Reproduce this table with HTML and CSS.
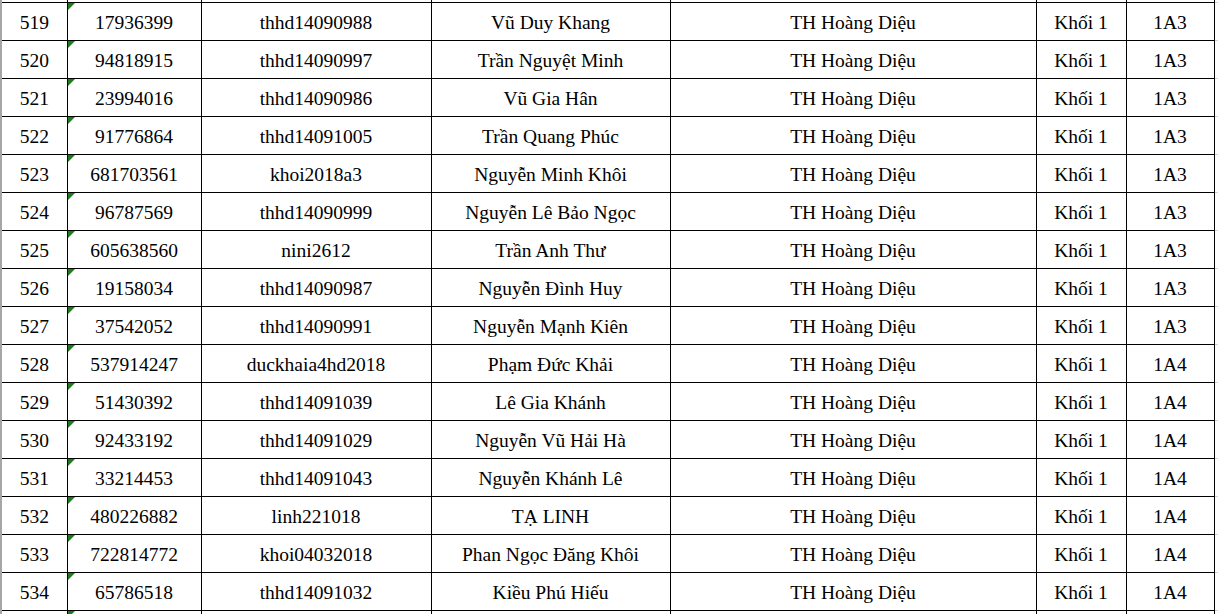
FILE: index.html
```html
<!DOCTYPE html>
<html lang="vi">
<head>
<meta charset="utf-8">
<title>Danh sách</title>
<link rel="stylesheet" href="styles.css">
</head>
<body>
<div class="sheet">
<table class="grid">
<colgroup>
<col class="c1"><col class="c2"><col class="c3"><col class="c4"><col class="c5"><col class="c6"><col class="c7"><col class="c8">
</colgroup>
<tbody>
<tr class="edge"><td></td><td class="txt"></td><td></td><td></td><td></td><td></td><td></td><td class="gap"></td></tr>
<tr><td>519</td><td class="txt">17936399</td><td>thhd14090988</td><td>Vũ Duy Khang</td><td>TH Hoàng Diệu</td><td>Khối 1</td><td>1A3</td><td class="gap"></td></tr>
<tr><td>520</td><td class="txt">94818915</td><td>thhd14090997</td><td>Trần Nguyệt Minh</td><td>TH Hoàng Diệu</td><td>Khối 1</td><td>1A3</td><td class="gap"></td></tr>
<tr><td>521</td><td class="txt">23994016</td><td>thhd14090986</td><td>Vũ Gia Hân</td><td>TH Hoàng Diệu</td><td>Khối 1</td><td>1A3</td><td class="gap"></td></tr>
<tr><td>522</td><td class="txt">91776864</td><td>thhd14091005</td><td>Trần Quang Phúc</td><td>TH Hoàng Diệu</td><td>Khối 1</td><td>1A3</td><td class="gap"></td></tr>
<tr><td>523</td><td class="txt">681703561</td><td>khoi2018a3</td><td>Nguyễn Minh Khôi</td><td>TH Hoàng Diệu</td><td>Khối 1</td><td>1A3</td><td class="gap"></td></tr>
<tr><td>524</td><td class="txt">96787569</td><td>thhd14090999</td><td>Nguyễn Lê Bảo Ngọc</td><td>TH Hoàng Diệu</td><td>Khối 1</td><td>1A3</td><td class="gap"></td></tr>
<tr><td>525</td><td class="txt">605638560</td><td>nini2612</td><td>Trần Anh Thư</td><td>TH Hoàng Diệu</td><td>Khối 1</td><td>1A3</td><td class="gap"></td></tr>
<tr><td>526</td><td class="txt">19158034</td><td>thhd14090987</td><td>Nguyễn Đình Huy</td><td>TH Hoàng Diệu</td><td>Khối 1</td><td>1A3</td><td class="gap"></td></tr>
<tr><td>527</td><td class="txt">37542052</td><td>thhd14090991</td><td>Nguyễn Mạnh Kiên</td><td>TH Hoàng Diệu</td><td>Khối 1</td><td>1A3</td><td class="gap"></td></tr>
<tr><td>528</td><td class="txt">537914247</td><td>duckhaia4hd2018</td><td>Phạm Đức Khải</td><td>TH Hoàng Diệu</td><td>Khối 1</td><td>1A4</td><td class="gap"></td></tr>
<tr><td>529</td><td class="txt">51430392</td><td>thhd14091039</td><td>Lê Gia Khánh</td><td>TH Hoàng Diệu</td><td>Khối 1</td><td>1A4</td><td class="gap"></td></tr>
<tr><td>530</td><td class="txt">92433192</td><td>thhd14091029</td><td>Nguyễn Vũ Hải Hà</td><td>TH Hoàng Diệu</td><td>Khối 1</td><td>1A4</td><td class="gap"></td></tr>
<tr><td>531</td><td class="txt">33214453</td><td>thhd14091043</td><td>Nguyễn Khánh Lê</td><td>TH Hoàng Diệu</td><td>Khối 1</td><td>1A4</td><td class="gap"></td></tr>
<tr><td>532</td><td class="txt">480226882</td><td>linh221018</td><td>TẠ LINH</td><td>TH Hoàng Diệu</td><td>Khối 1</td><td>1A4</td><td class="gap"></td></tr>
<tr><td>533</td><td class="txt">722814772</td><td>khoi04032018</td><td>Phan Ngọc Đăng Khôi</td><td>TH Hoàng Diệu</td><td>Khối 1</td><td>1A4</td><td class="gap"></td></tr>
<tr><td>534</td><td class="txt">65786518</td><td>thhd14091032</td><td>Kiều Phú Hiếu</td><td>TH Hoàng Diệu</td><td>Khối 1</td><td>1A4</td><td class="gap"></td></tr>
<tr class="edge"><td></td><td class="txt"></td><td></td><td></td><td></td><td></td><td></td><td class="gap"></td></tr>
</tbody>
</table>
</div>
</body>
</html>
```

FILE: styles.css
```css
html, body {
  margin: 0;
  padding: 0;
  background: #ffffff;
  overflow: hidden;
  height: 614px;
  font-family: "Liberation Serif", "Times New Roman", Tinos, serif;
}

.sheet {
  height: 614px;
  overflow: hidden;
  border-left: 2px solid #a6a6a6;
  background: #ffffff;
}

.grid {
  border-collapse: collapse;
  table-layout: fixed;
  width: 1216px;
  margin-top: -36px;
  font-family: "Liberation Serif", "Times New Roman", Tinos, serif;
  font-size: 19.5px;
  color: #000000;
}

.c1 { width: 65px; }
.c2 { width: 134px; }
.c3 { width: 230px; }
.c4 { width: 239px; }
.c5 { width: 366px; }
.c6 { width: 90px; }
.c7 { width: 88px; }
.c8 { width: 4px; }

.grid td {
  height: 35px;
  padding: 2px 0 0 0;
  border: 1px solid #000000;
  text-align: center;
  vertical-align: middle;
  white-space: nowrap;
  overflow: hidden;
  line-height: 22px;
  font-family: "Liberation Serif", "Times New Roman", Tinos, serif;
}

.grid td:first-child {
  border-left: none;
}

.grid td.gap {
  border-top: 1px solid #d4d4d4;
  border-bottom: 1px solid #d4d4d4;
  border-right: none;
}

.grid td.txt {
  position: relative;
}

.grid td.txt::before {
  content: "";
  position: absolute;
  left: 0;
  top: 0;
  width: 0;
  height: 0;
  border-top: 7px solid #1e7b1e;
  border-right: 7px solid transparent;
}
```
